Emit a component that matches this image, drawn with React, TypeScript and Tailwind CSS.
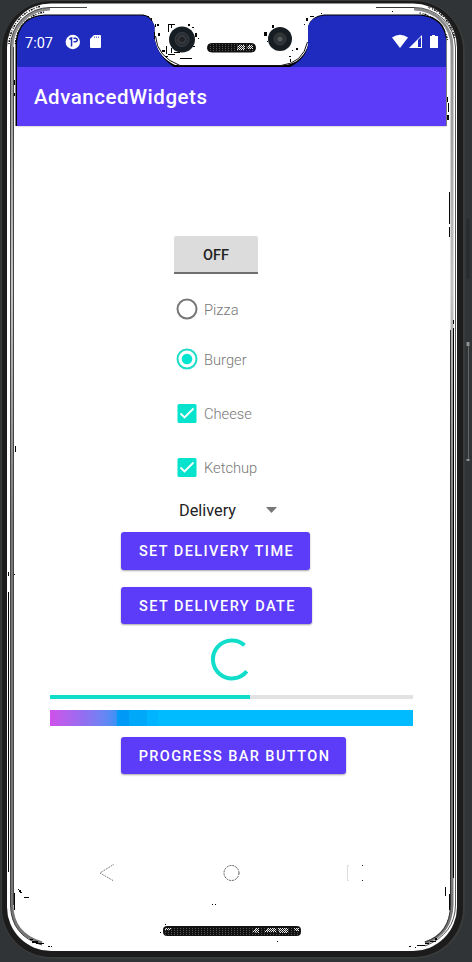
import type { ReactNode } from "react";

const specks: number[][] = [
  [18, 889, 1, 1], [19, 890, 2, 2], [20, 892, 2, 1], [24, 897, 5, 1], [14, 893, 1, 17],
  [212, 904, 1, 1], [215, 904, 1, 1], [160, 932, 1, 1], [165, 924, 1, 1], [277, 941, 1, 1],
  [445, 887, 1, 9], [449, 894, 1, 16], [15, 446, 1, 6], [8, 572, 1, 4], [14, 574, 1, 1], [8, 592, 1, 280],
  [449, 192, 1, 32], [449, 227, 1, 10], [453, 320, 1, 4], [453, 328, 1, 550],
  [409, 946, 2, 1], [415, 947, 1, 1], [417, 945, 8, 1], [425, 943, 4, 1], [430, 941, 6, 1], [435, 938, 2, 2],
  [48, 946, 2, 1], [51, 946, 1, 1], [36, 943, 8, 1], [32, 941, 6, 2], [30, 939, 3, 1],
  [168, 24, 7, 1], [168, 24, 1, 8], [171, 25, 1, 3], [157, 24, 2, 2], [158, 33, 2, 3], [188, 24, 2, 2],
  [192, 27, 2, 1], [195, 33, 2, 4], [198, 38, 1, 1], [193, 46, 2, 1], [166, 46, 1, 8], [171, 48, 1, 5],
  [174, 52, 6, 1], [180, 58, 12, 1], [162, 50, 3, 2], [168, 54, 7, 1], [165, 56, 3, 1],
  [272, 25, 2, 3], [264, 32, 3, 4], [267, 41, 1, 1], [296, 48, 2, 2], [292, 50, 1, 1], [289, 56, 2, 1],
  [290, 59, 1, 3], [304, 24, 1, 1], [306, 18, 2, 3], [310, 16, 4, 1], [321, 13, 1, 1], [392, 11, 1, 1],
  [147, 16, 2, 1], [151, 18, 1, 3], [155, 24, 1, 3], [154, 32, 1, 7], [447, 97, 1, 5], [448, 103, 1, 9],
  [447, 115, 2, 5], [14, 80, 1, 5], [14, 93, 1, 3],
];

const DeviceFrame = () => (
  <svg className="absolute inset-0 h-[962px] w-[472px]" viewBox="0 0 472 962" fill="none">
    <defs>
      <linearGradient id="rail" x1="0" y1="0" x2="0" y2="962" gradientUnits="userSpaceOnUse">
        <stop offset="0" stopColor="#888" />
        <stop offset=".3" stopColor="#c5c3c5" />
        <stop offset=".55" stopColor="#777" />
        <stop offset="1" stopColor="#777" />
      </linearGradient>
      <pattern id="mesh" width="3" height="2" patternUnits="userSpaceOnUse">
        <rect width="3" height="2" fill="#111" />
        <rect width="1" height="1" fill="#555" />
      </pattern>
      <pattern id="grain" width="2" height="2" patternUnits="userSpaceOnUse">
        <path d="M0 0h1v1H0zM1 1h1v1H1z" fill="#eee" />
      </pattern>
    </defs>
    <rect width="472" height="962" fill="#303436" />
    <rect x="1" y="0" width="464" height="959" rx="51" fill="#3a3b3b" />
    <rect x="2" y="1" width="461" height="956" rx="49" fill="#1c1c1c" />
    <rect x="7" y="3.5" width="450" height="947.5" rx="44" fill="#fff" />
    <path d="M12 905V47A38 38 0 0 1 50 9M42 943Q12 934 12 905" stroke="url(#rail)" strokeWidth="3" />
    <path d="M10.500 905V47A39.500 39.500 0 0 1 50 7.500H87M42 945Q11 936 10.500 905M13.500 905V47" stroke="#444" />
    <path d="M452 905V47A38 38 0 0 0 414 9M425 943Q451 934 452 905" stroke="url(#rail)" strokeWidth="3" />
    <path d="M414 7.500H376M450.500 905V330M425 942Q450 934 450.500 905" stroke="#333" />
    <path d="M455.500 905V47A41 41 0 0 0 414 7.500M425 946Q455 934 455.500 905" stroke="#555" />
    <path d="M9 44A41 41 0 0 1 40 6.500M15.500 44A34 34 0 0 1 45 12M454.500 38A41 41 0 0 0 428 7M447.500 40A34 34 0 0 0 419 13" stroke="#111" strokeWidth="1.500" strokeDasharray="1 1 2 1 1 2" />
    <path d="M468 219v60" stroke="#282a2c" strokeWidth="3" />
    <path d="M468.500 344v117" stroke="#656866" />
    <path d="M468 342v4M468 459v2" stroke="#90938f" strokeWidth="3" />
    <path d="M15.500 126V43Q18 16 45 14.500H143Q151 15 154.500 26V38Q158 57 175 65H286Q303 62 308.500 44V26Q311 16 324 14.500H421Q446 17 446.500 40V126" fill="#000" />
    <path d="M17 67V43Q19 17 45 15.500H142Q151 16 154.500 26V38Q158 57 174 67H290Q307 58 308 44V26Q311 17 324 15.500H420Q444 18 446 40V67Z" fill="#1e2bbe" />
    <path d="M155 38Q158 60 180 65.500H281Q303 63 307.500 43V24Q303 10 290 8H170Q157 12 155 24Z" fill="#fff" />
    <path d="M155.500 36Q157 57 180 65.500H281Q303 63 307.500 42" stroke="#111" />
    <circle cx="182" cy="39.500" r="13" fill="#171e23" />
    <circle cx="182" cy="39.500" r="7" fill="#292f34" stroke="#363e44" />
    <circle cx="182" cy="39.500" r="3.500" fill="#202428" stroke="#444" />
    <circle cx="280" cy="39" r="12" fill="#171e23" />
    <circle cx="280" cy="39" r="6" fill="#2c3237" stroke="#38413e" />
    <circle cx="280" cy="39" r="2.500" fill="#555a58" />
    <rect x="207.500" y="43.500" width="48" height="8.500" rx="4" fill="url(#mesh)" stroke="#111" />
    <path d="M238 45h7v5h-8zM248 45h5v4h-6z" fill="url(#grain)" />
    <rect x="163.500" y="926.500" width="137" height="9" rx="3" fill="url(#mesh)" stroke="#111" />
    <path d="M165 928h6v2h-6zM252 932l4-4h3v5zM264 932l4-4h8v4zM277 928h11v5h-8zM294 928h5v3h-4z" fill="url(#grain)" />
    {specks.map(([x, y, w, h], i) => <rect key={i} x={x} y={y} width={w} height={h} fill="#050505" />)}
  </svg>
);

const StatusBar = () => (
  <div className="flex h-[67px] items-start pt-[34px] text-white">
    <span className="ml-[8px] w-[31px] pt-px text-[14.500px] leading-[17px] whitespace-nowrap">7:07</span>
    <svg className="ml-[9px] h-4 w-4" viewBox="0 0 16 16">
      <circle cx="7.800" cy="8" r="7.200" fill="#fff" />
      <path d="M3.800 5Q5 3 7.300 3v9.500H5.800V6Z" fill="#1e2bbe" />
      <path d="M8.500 3.500H10q3 .3 3 2.500t-3 2.500H8.500V7H10q1.500 0 1.500-1T10 5H8.500z" fill="#1e2bbe" />
    </svg>
    <svg className="ml-[9px] h-4 w-[11px]" viewBox="0 0 11 16">
      <path d="M4 1h6q1 0 1 1v11q0 1-1 1H1q-1 0-1-1V5z" fill="#fff" />
      <path d="M4 2.500h1V4H4zM6 2.500h1V4H6zM8 2.500h1V4H8z" fill="#1e2bbe" opacity=".65" />
    </svg>
    <svg className="ml-[291px] h-4 w-[47px]" viewBox="0 0 47 16">
      <path d="M0 3.500Q8-2 16 3.500L8 14z" fill="#fff" />
      <path d="M17 14 30 1v13z" fill="#fff" />
      <path d="M26 6l3-3v10h-3z" fill="#1e2bbe" />
      <path d="M40 1h3v1h3v12h-8V2h2z" fill="#fff" />
    </svg>
  </div>
);

const PurpleButton = ({ children, size }: { children: ReactNode; size: string }) => (
  <button className={`${size} ml-[104px] block rounded-[3px] bg-[#5c3bf9] pt-[2px] pl-[2px] text-center text-[14.500px] font-medium tracking-[1.420px] whitespace-nowrap text-white shadow-[0_1px_2px_rgba(0,0,0,0.35)]`}>
    {children}
  </button>
);

const Choice = ({ label, children, top }: { label: string; children: ReactNode; top: string }) => (
  <label className={`${top} ml-[159px] flex h-[22px] items-center`}>
    {children}
    <span className="ml-[6px] pt-[3px] text-[14.700px] font-light text-[#777]">{label}</span>
  </label>
);

const Radio = ({ on }: { on?: boolean }) => (
  <svg className="h-[22px] w-[22px]" viewBox="0 0 22 22" fill="none">
    <circle cx="11" cy="11" r="9.500" stroke={on ? "#1ddcc8" : "#777"} strokeWidth="2" />
    {on && <circle cx="11" cy="11" r="5.300" fill="#00e5cf" />}
  </svg>
);

const Check = () => (
  <svg className="h-[22px] w-[22px]" viewBox="0 0 22 22" fill="none">
    <rect x="1.500" y="2" width="19" height="19" rx="1.500" fill="#05e3cd" />
    <path d="m4.500 11.500 4 4 9-9" stroke="#fff" strokeWidth="1.800" />
  </svg>
);

export default function App() {
  return (
    <main className="relative h-[962px] w-[472px] overflow-hidden font-['Roboto',sans-serif]">
      <DeviceFrame />
      <div className="relative ml-[17px] w-[429px]">
        <StatusBar />
        <header className="flex h-[59px] items-center bg-[#5c3bf9] pl-[17px] pt-[2px] text-[20.500px] font-medium tracking-[0.520px] text-white shadow-[0_1px_1px_rgba(0,0,0,0.12)]">
          AdvancedWidgets
        </header>
        <button className="mt-[110px] ml-[157px] block h-[38px] w-[84px] rounded-t-[2px] border-b-2 border-[#706e70] bg-[#dcdcdc] pt-[4px] text-[14.500px] font-medium text-[#222]">OFF</button>
        <Choice label="Pizza" top="mt-[24px]"><Radio /></Choice>
        <Choice label="Burger" top="mt-[28px]"><Radio on /></Choice>
        <Choice label="Cheese" top="mt-[32px]"><Check /></Choice>
        <Choice label="Ketchup" top="mt-[32px]"><Check /></Choice>
        <div className="mt-[21px] ml-[162px] flex h-[22px] items-center text-[16.300px] text-[#222]">
          <span className="w-[87px] pt-[2px]">Delivery</span>
          <svg className="h-[6px] w-[11px]" viewBox="0 0 11 6"><path d="M0 0h11L5.500 6z" fill="#777" /></svg>
        </div>
        <PurpleButton size="mt-[11px] h-[38px] w-[189px]">SET DELIVERY TIME</PurpleButton>
        <PurpleButton size="mt-[17px] h-[37px] w-[191px]">SET DELIVERY DATE</PurpleButton>
        <svg className="mt-[14px] ml-[193px] block h-[44px] w-[44px]" viewBox="0 0 44 44" fill="none">
          <path d="M34.500 7.200A19 19 0 1 0 36.800 33.300" stroke="#10ddca" strokeWidth="4" />
        </svg>
        <div className="mt-[13px] ml-[33px] h-1 w-[363px] bg-[#e2e2e2]"><div className="h-1 w-[200px] bg-[#10ddca]" /></div>
        <div className="mt-[11px] ml-[33px] flex h-4 w-[363px] bg-[#00bbff]">
          <div className="w-[67px] bg-linear-to-r from-[#cf50ea] via-[#936ef0] to-[#3692f5]" />
          <div className="w-3 bg-[#0099f5]" />
          <div className="w-[18px] bg-[#00a8fa]" />
          <div className="w-[11px] bg-[#00b4ff]" />
        </div>
        <PurpleButton size="mt-[11px] h-[37px] w-[225px]">PROGRESS BAR BUTTON</PurpleButton>
        <nav className="mt-[89px] ml-[82px] flex h-[20px] items-center">
          <svg className="h-5 w-[270px]" viewBox="0 0 270 20" fill="none">
            <path d="M14.500 1.500 1 10l13 7.500" stroke="#555" strokeDasharray="1 1" />
            <circle cx="132.500" cy="10" r="7.500" stroke="#555" strokeDasharray="2 1" />
            <path d="M250 2.500h-1.500v15h1.500" stroke="#ddd" />
            <path d="M263 2h1v1h-1zM263 17h1v1h-1z" fill="#222" />
          </svg>
        </nav>
      </div>
    </main>
  );
}
